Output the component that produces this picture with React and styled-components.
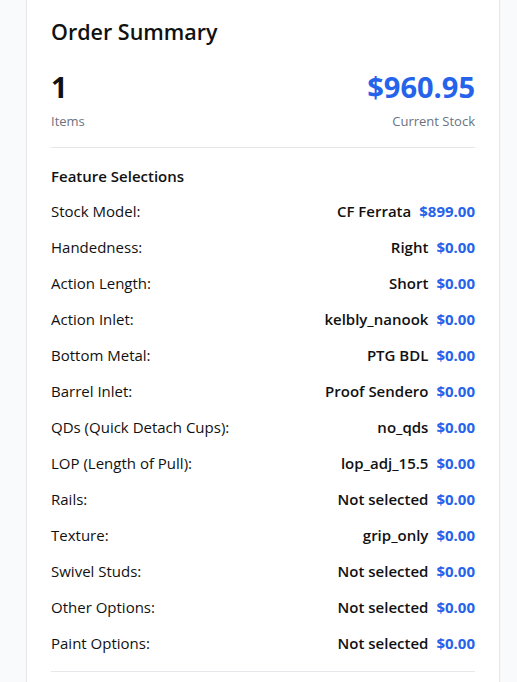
import React from "react";
import styled, { createGlobalStyle } from "styled-components";

const GlobalStyle = createGlobalStyle`
  html, body {
    margin: 0;
    padding: 0;
    background: #f9fafb;
    font-family: "Open Sans", "Noto Sans", sans-serif;
    color: #111827;
  }
`;

const features = [
  { label: "Stock Model:", value: "CF Ferrata", price: "$899.00" },
  { label: "Handedness:", value: "Right", price: "$0.00" },
  { label: "Action Length:", value: "Short", price: "$0.00" },
  { label: "Action Inlet:", value: "kelbly_nanook", price: "$0.00" },
  { label: "Bottom Metal:", value: "PTG BDL", price: "$0.00" },
  { label: "Barrel Inlet:", value: "Proof Sendero", price: "$0.00" },
  { label: "QDs (Quick Detach Cups):", value: "no_qds", price: "$0.00" },
  { label: "LOP (Length of Pull):", value: "lop_adj_15.5", price: "$0.00" },
  { label: "Rails:", value: "Not selected", price: "$0.00" },
  { label: "Texture:", value: "grip_only", price: "$0.00" },
  { label: "Swivel Studs:", value: "Not selected", price: "$0.00" },
  { label: "Other Options:", value: "Not selected", price: "$0.00" },
  { label: "Paint Options:", value: "Not selected", price: "$0.00" },
];

export default function App() {
  return (
    <>
      <GlobalStyle />
      <Page>
        <Card>
          <Title>Order Summary</Title>
          <Stats>
            <Stat>
              <StatValue>1</StatValue>
              <StatLabel>Items</StatLabel>
            </Stat>
            <Stat $right>
              <StatValue $blue>$960.95</StatValue>
              <StatLabel>Current Stock</StatLabel>
            </Stat>
          </Stats>
          <Section>
            <SectionTitle>Feature Selections</SectionTitle>
            <Rows>
              {features.map((item, index) => (
                <Row key={index}>
                  <Label>{item.label}</Label>
                  <ValueGroup>
                    <Value>{item.value}</Value>
                    <Price>{item.price}</Price>
                  </ValueGroup>
                </Row>
              ))}
            </Rows>
          </Section>
        </Card>
      </Page>
    </>
  );
}

const Page = styled.div`
  padding: 0 17px 0 26px;
  min-height: 682px;
  box-sizing: border-box;
`;

const Card = styled.div`
  width: 474px;
  box-sizing: border-box;
  background: #fff;
  border: 1px solid #e5e7eb;
  border-top: none;
  padding: 16px 24px 40px 24px;
  box-shadow: 0 1px 2px rgba(0, 0, 0, 0.04);
`;

const Title = styled.h2`
  margin: 0;
  font-size: 21.5px;
  line-height: 32px;
  font-weight: 600;
  color: #111;
`;

const Stats = styled.div`
  display: flex;
  justify-content: space-between;
  padding: 21px 0 16px;
  border-bottom: 1px solid #e5e7eb;
`;

const Stat = styled.div`
  display: flex;
  flex-direction: column;
  align-items: ${(props) => (props.$right ? "flex-end" : "flex-start")};
`;

const StatValue = styled.div`
  font-size: 29px;
  line-height: 36px;
  font-weight: 700;
  color: ${(props) => (props.$blue ? "#2563eb" : "#111")};
`;

const StatLabel = styled.div`
  margin-top: 6px;
  font-size: 13px;
  line-height: 20px;
  color: #6b7280;
`;

const Section = styled.div`
  padding: 16px 0;
  border-bottom: 1px solid #e5e7eb;
`;

const SectionTitle = styled.h3`
  margin: 0 0 11px;
  font-size: 15px;
  line-height: 24px;
  font-weight: 600;
  color: #111;
`;

const Rows = styled.div`
  display: flex;
  flex-direction: column;
  gap: 12px;
`;

const Row = styled.div`
  display: flex;
  justify-content: space-between;
  align-items: center;
  font-size: 15px;
  line-height: 24px;
`;

const Label = styled.span`
  color: #111;
`;

const ValueGroup = styled.div`
  display: flex;
  align-items: center;
  gap: 8px;
`;

const Value = styled.span`
  font-weight: 600;
  color: #111;
`;

const Price = styled.span`
  font-weight: 700;
  color: #2563eb;
`;
